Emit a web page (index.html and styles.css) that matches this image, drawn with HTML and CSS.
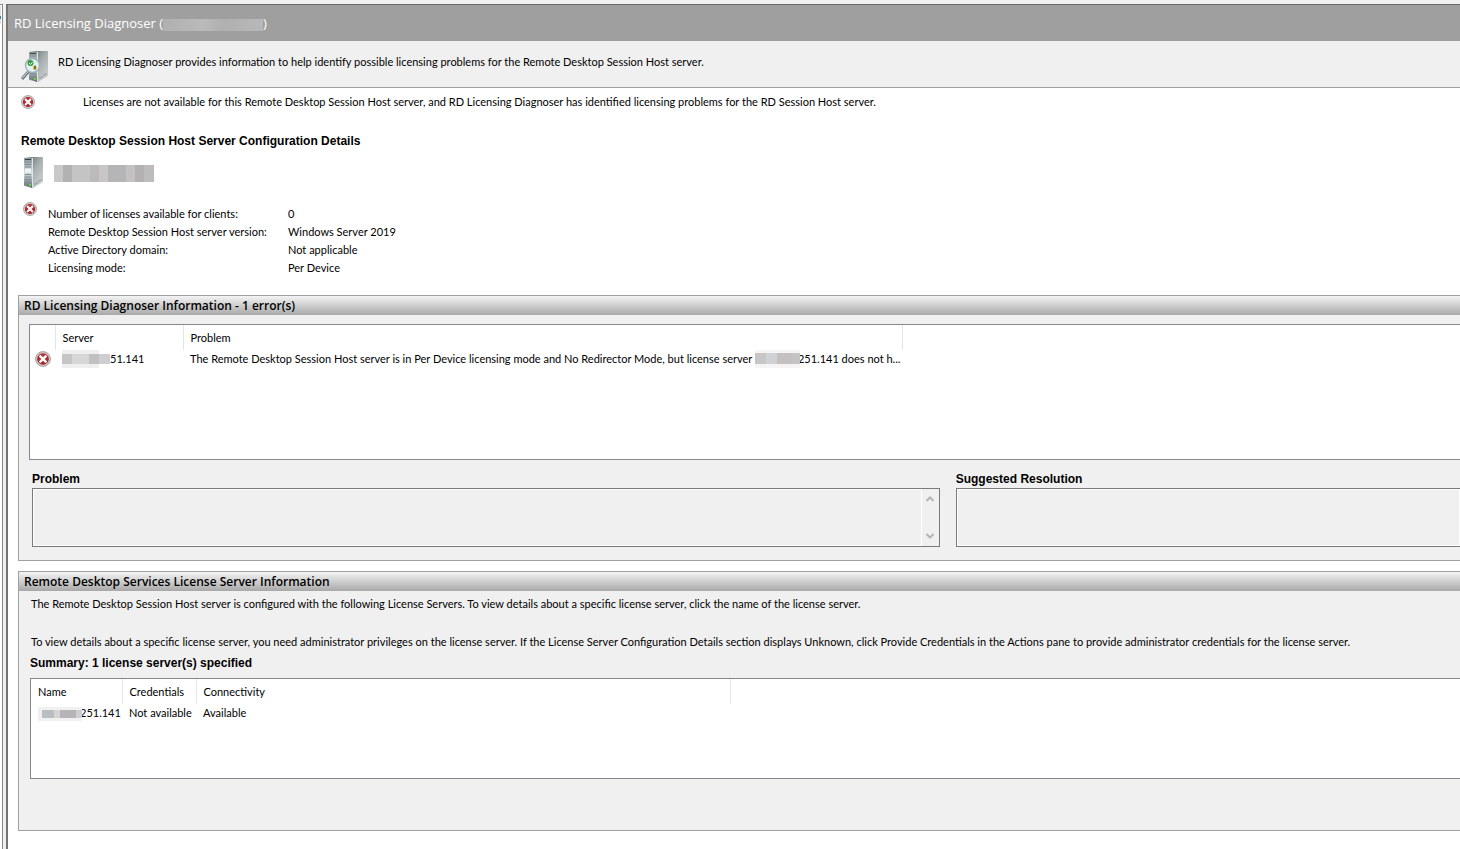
FILE: index.html
```html
<!DOCTYPE html>
<html lang="en">
<head>
<meta charset="utf-8">
<title>RD Licensing Diagnoser</title>
<link rel="stylesheet" href="styles.css">
</head>
<body>
<svg class="defs" width="0" height="0" aria-hidden="true">
  <defs>
    <linearGradient id="side" x1="0" y1="0" x2="1" y2="1"><stop offset="0" stop-color="#56605f"/><stop offset=".5" stop-color="#a9b0b0"/><stop offset="1" stop-color="#d5d8d8"/></linearGradient>
    <linearGradient id="front" x1="0" y1="0" x2="0" y2="1"><stop offset="0" stop-color="#8d9a9f"/><stop offset=".5" stop-color="#d3dde1"/><stop offset="1" stop-color="#5c686c"/></linearGradient>
    <radialGradient id="red" cx=".5" cy=".4" r=".6"><stop offset="0" stop-color="#d0474b"/><stop offset="1" stop-color="#941a20"/></radialGradient>
    <symbol id="error" viewBox="0 0 16 16">
      <circle cx="8" cy="8" r="7.400" fill="#d4cccc" stroke="#978a8a" stroke-width=".8"/>
      <circle cx="8" cy="8" r="5.800" fill="url(#red)"/>
      <path d="M4.600 4.600l6.800 6.800M11.400 4.600l-6.800 6.800" stroke="#fff" stroke-width="2.200"/>
    </symbol>
    <symbol id="server" viewBox="0 0 20 32">
      <path d="M0 1L8 0H19V25L9 31L0 29Z" fill="url(#side)"/>
      <path d="M0 1H8V31L0 28Z" fill="url(#front)"/>
      <path d="M1 2.500H7" stroke="#36444a"/>
      <path d="M1 5H7M1 7.500H7M1 10H7M1 17.500H7M1 20H7M1 22.500H7M1 25H7" stroke="#7d8b91"/>
      <path d="M1 13.500H7" stroke="#eef4f6" stroke-width="4"/>
      <path d="M8.500 1V30" stroke="#e1e5e5"/>
      <path d="M11 26v2M13 25v2M15 23v2M17 22v2" stroke="#8b9494"/>
      <rect x="5" y="27" width="2" height="2" fill="#6fd13c"/>
    </symbol>
  </defs>
</svg>
<div class="window">
  <div class="splitter"></div>
  <main class="pane">
    <header class="titlebar"><h1>RD Licensing Diagnoser (<span class="mask mask-title"></span>)</h1></header>
    <div class="banner">
      <svg class="banner-icon" viewBox="0 0 28 32" aria-hidden="true">
        <use href="#server" x="8" y="0" width="20" height="32"/>
        <path d="M8 20L1 28" stroke="#6d7880" stroke-width="3"/>
        <path d="M7.500 20L1 27.500" stroke="#d3dce1"/>
        <circle cx="11.500" cy="14.500" r="7" fill="#e3f1f3" stroke="#9eb4bd" stroke-width="1.500"/>
        <circle cx="9.500" cy="12" r="3" fill="#2f9c35"/>
        <path d="M8 12l1.500 1.500 2-2.500" stroke="#fff" fill="none"/>
        <path d="M12 15h3.500v3.500h-3.500z" fill="#d8c530"/><path d="M14 14.500v4" stroke="#222"/>
      </svg>
      <p>RD Licensing Diagnoser provides information to help identify possible licensing problems for the Remote Desktop Session Host server.</p>
    </div>
    <div class="status">
      <svg class="error-icon" aria-label="Error"><use href="#error"/></svg>
      <p>Licenses are not available for this Remote Desktop Session Host server, and RD Licensing Diagnoser has identified licensing problems for the RD Session Host server.</p>
    </div>
    <section class="config">
      <h2>Remote Desktop Session Host Server Configuration Details</h2>
      <div class="host">
        <svg class="server-icon" aria-hidden="true"><use href="#server"/></svg>
        <span class="mask mask-host"></span>
      </div>
      <div class="facts">
        <svg class="error-icon" aria-label="Error"><use href="#error"/></svg>
        <dl>
          <dt>Number of licenses available for clients:</dt><dd>0</dd>
          <dt>Remote Desktop Session Host server version:</dt><dd>Windows Server 2019</dd>
          <dt>Active Directory domain:</dt><dd>Not applicable</dd>
          <dt>Licensing mode:</dt><dd>Per Device</dd>
        </dl>
      </div>
    </section>
    <section class="group">
      <h2 class="group-title">RD Licensing Diagnoser Information - 1 error(s)</h2>
      <div class="group-body diagnoser">
        <div class="list list-problems">
          <table>
            <colgroup><col class="c-icon"><col class="c-server"><col class="c-problem"><col></colgroup>
            <thead><tr><th></th><th>Server</th><th>Problem</th><td></td></tr></thead>
            <tbody><tr>
              <td class="icon-cell"><svg class="row-icon" aria-label="Error"><use href="#error"/></svg></td>
              <td><span class="mask mask-server"></span>51.141</td>
              <td>The Remote Desktop Session Host server is in Per Device licensing mode and No Redirector Mode, but license server <span class="mask mask-ip"></span>251.141 does not h...</td>
              <td></td>
            </tr></tbody>
          </table>
        </div>
        <div class="details">
          <div class="field">
            <label for="problem">Problem</label>
            <div class="memo">
              <textarea id="problem" readonly></textarea>
              <div class="scroll">
                <button type="button" aria-label="Scroll up"><svg viewBox="0 0 8 6"><path d="M0.500 5L4 1.500L7.500 5"/></svg></button>
                <button type="button" aria-label="Scroll down"><svg viewBox="0 0 8 6"><path d="M0.500 1L4 4.500L7.500 1"/></svg></button>
              </div>
            </div>
          </div>
          <div class="field">
            <label for="resolution">Suggested Resolution</label>
            <div class="memo memo-open"><textarea id="resolution" readonly></textarea></div>
          </div>
        </div>
      </div>
    </section>
    <section class="group">
      <h2 class="group-title">Remote Desktop Services License Server Information</h2>
      <div class="group-body licenses">
        <p>The Remote Desktop Session Host server is configured with the following License Servers. To view details about a specific license server, click the name of the license server.</p>
        <p>To view details about a specific license server, you need administrator privileges on the license server. If the License Server Configuration Details section displays Unknown, click Provide Credentials in the Actions pane to provide administrator credentials for the license server.</p>
        <h3>Summary: 1 license server(s) specified</h3>
        <div class="list list-servers">
          <table>
            <colgroup><col class="c-name"><col class="c-cred"><col class="c-conn"><col></colgroup>
            <thead><tr><th>Name</th><th>Credentials</th><th>Connectivity</th><td></td></tr></thead>
            <tbody><tr><td><span class="mask mask-name"></span>251.141</td><td>Not available</td><td>Available</td><td></td></tr></tbody>
          </table>
        </div>
      </div>
    </section>
  </main>
</div>
</body>
</html>
```
FILE: styles.css
```css
* { box-sizing: border-box; }
body { margin: 0; background: #fff; color: #000; font: 11px/18px Lato, Roboto, sans-serif; }
h1, h2, h3, p, dl, dd { margin: 0; }
svg { display: block; flex: none; }
.defs { position: absolute; }
.window { display: flex; min-height: 100vh; overflow: hidden; padding-top: 4px; background: #f0f0f0; }
.splitter { flex: none; width: 3px; margin-right: 3px; background: linear-gradient(#dfe3e6, #dfe3e6 55%, #3f7f9f 55% 70%, #dfe3e6 70%) 0 1px / 1px 18px no-repeat, #fff; border-top: 1px solid #888; border-right: 1px solid #888; }
.pane { flex: 1; min-width: 0; background: #fff; border-left: 2px solid #737373; border-top: 1px solid #696969; white-space: nowrap; overflow: hidden; }
.titlebar { background: #9f9f9f; color: #fff; padding: 8px 6px 8px; }
.titlebar h1 { font: 13px/20px "Open Sans", "Noto Sans", sans-serif; }
.banner { display: flex; gap: 9px; height: 47px; padding: 10px 13px 0; background: #f0f0f0; border-bottom: 1px solid #a0a0a0; }
.banner-icon { width: 28px; height: 32px; }
.banner p { padding-top: 2px; }
.status { display: flex; gap: 48px; align-items: center; padding: 5px 13px 0; }
.error-icon { width: 14px; height: 14px; }
.config { padding: 21px 13px 0; }
.config h2, h3, label { font: 700 12px/18px "Liberation Sans", Arial, sans-serif; color: #000; }
.host { display: flex; gap: 10px; align-items: center; padding: 7px 3px 0; }
.server-icon { width: 20px; height: 32px; }
.facts { display: flex; gap: 11px; padding: 13px 2px 0; }
.facts dl { display: grid; grid-template-columns: 240px auto; padding-top: 3px; }
.mask { display: inline-block; vertical-align: middle; }
.mask-title { width: 100px; height: 12px; background: linear-gradient(90deg, #b0b0b0, #bababa 40%, #b0b0b0 60%, #b8b8b8); }
.mask-host { width: 100px; height: 17px; background: linear-gradient(90deg, #c9c7c8 9%, #b3b1b2 9% 18%, #c5c4c5 18% 36%, #bcbabb 36% 45%, #c8c6c7 45% 54%, #b5b4b6 54% 72%, #c3c1c2 72% 81%, #b3b1b2 81% 90%, #bdbbbc 90%); }
.mask-server { width: 48px; height: 24px; background: linear-gradient(90deg, #c5c5c5 20%, #d6d6d6 20% 56%, #c2bfc0 56% 78%, #cdcdd2 78%) 0 6px / 100% 10px no-repeat, linear-gradient(#efefef, #efefef) 0 0 / 37px 100% no-repeat; }
.mask-ip { width: 45px; height: 26px; margin-right: -2px; position: relative; background: linear-gradient(90deg, #c6c6c6 25%, #cfd1d6 25% 49%, #c5bfbf 49% 82%, #c4c4c4 82%) 0 6px / 100% 11px no-repeat, #f5f5f5; }
.mask-name { width: 44px; height: 14px; margin-right: -2px; position: relative; background: linear-gradient(90deg, #efefef 8%, #b9bec3 8% 36%, #d5d5d5 36% 50%, #b8b3b6 50% 86%, #cfcfcf 86%) 0 3px / 100% 8px no-repeat, #f1f1f1; }
.group { margin: 18px 0 0 10px; border: 1px solid #a0a0a0; border-right: 0; background: #f0f0f0; }
.group + .group { margin-top: 10px; }
.group-title { padding-left: 5px; color: #000; font: 600 12px/19px "Open Sans", "Noto Sans", sans-serif; background: linear-gradient(#f4f4f4, #a8a8a8); }
.diagnoser { padding: 9px 0 13px 10px; }
.licenses { padding: 4px 0 51px 11px; }
.licenses p { padding-left: 1px; }
.licenses p + p { margin-top: 20px; }
.licenses h3 { margin-top: 3px; }
.list { background: #fff; border: 1px solid #828790; border-right: 0; }
.list-problems { min-height: 136px; }
.list-servers { min-height: 101px; margin-top: 6px; }
table { width: 100%; table-layout: fixed; border-collapse: collapse; }
th, td { padding: 0 0 0 7px; text-align: left; font-weight: 400; overflow: hidden; }
th { height: 25px; border-right: 1px solid #e5e5e5; }
tbody td { height: 18px; line-height: 18px; }
tbody .mask { margin-top: -6px; margin-bottom: -6px; }
tbody .icon-cell { padding-left: 5px; }
.row-icon { width: 16px; height: 16px; }
.c-icon { width: 25px; }
.c-server { width: 128px; }
.c-problem { width: 719px; }
.c-name { width: 91px; }
.c-cred { width: 74px; }
.c-conn { width: 534px; }
.details { display: grid; grid-template-columns: 9fr 5fr; gap: 16px; padding: 10px 0 0 3px; }
.field { display: flex; flex-direction: column; }
.memo { display: flex; height: 59px; border: 1px solid #7a7a7a; }
.memo-open { border-right: 0; }
textarea { flex: 1; min-width: 0; resize: none; border: 1px solid #fff; background: #f0f0f0; font: inherit; outline: 0; }
.scroll { display: flex; flex-direction: column; justify-content: space-between; width: 17px; }
button { border: 0; padding: 0; height: 20px; background: none; display: grid; place-items: center; }
button svg { width: 8px; height: 6px; fill: none; stroke: #b5b5b5; stroke-width: 2px; }
```
